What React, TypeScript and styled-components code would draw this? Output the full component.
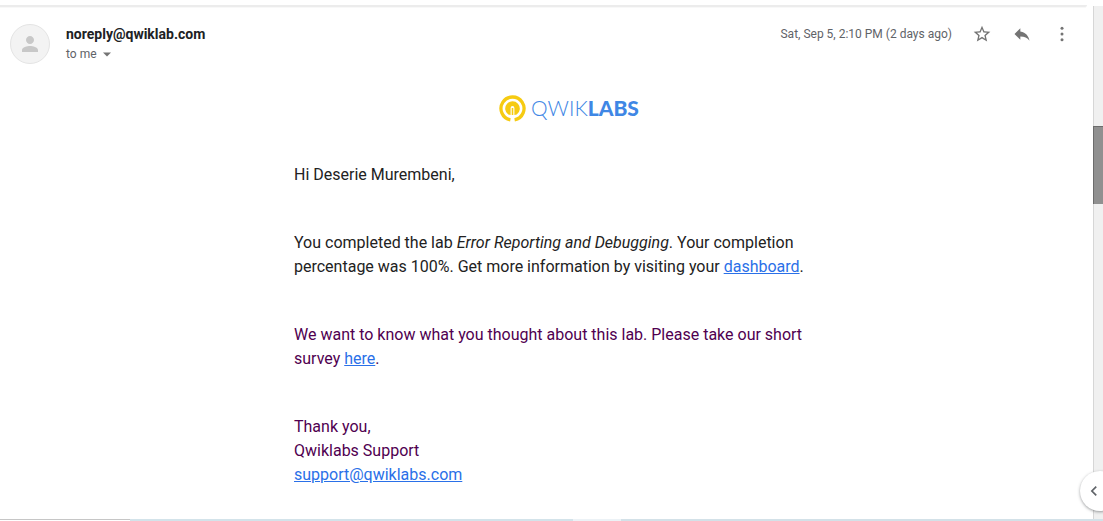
import React from "react";
import styled, { createGlobalStyle } from "styled-components";

const GlobalStyle = createGlobalStyle`
  * { box-sizing: border-box; }
  body {
    margin: 0;
    background: #fff;
    color: #222;
    font-family: Roboto, "Liberation Sans", sans-serif;
  }
`;

const Page = styled.div`
  position: relative;
  display: flex;
  flex-direction: column;
  min-height: 100vh;
  padding-top: 5px;
  overflow: hidden;
`;

const Main = styled.div`
  flex: 1;
  display: flex;
`;

const Pane = styled.main`
  flex: 1;
  min-width: 0;
`;

const TopEdge = styled.div`
  height: 3px;
  margin-right: 6px;
  background: #ececec;
  border-bottom: 1px solid #f8f8f8;
  border-bottom-right-radius: 3px;
`;

const Message = styled.article`
  padding: 16px 21px 32px 10px;
`;

const Header = styled.header`
  display: flex;
  align-items: flex-start;
  gap: 16px;
`;

const Avatar = styled.div`
  display: flex;
  align-items: center;
  justify-content: center;
  width: 40px;
  height: 40px;
  border: 1px solid #e4e4e4;
  border-radius: 50%;
  background: #f3f3f3;
`;

const Sender = styled.div`
  flex: 1;
  min-width: 0;
`;

const SenderName = styled.h3`
  margin: 0;
  font-size: 14px;
  line-height: 20px;
  font-weight: 700;
  color: #202124;
`;

const Recipient = styled.button`
  display: flex;
  align-items: center;
  gap: 5px;
  padding: 0;
  border: 0;
  background: none;
  font: inherit;
  font-size: 12px;
  line-height: 20px;
  color: #5f6368;
  cursor: pointer;
`;

const Actions = styled.div`
  display: flex;
  align-items: center;
  gap: 20px;
`;

const Sent = styled.time`
  font-size: 12px;
  line-height: 20px;
  color: #5f6368;
`;

const IconButton = styled.button`
  display: flex;
  padding: 0;
  border: 0;
  background: none;
  color: #747474;
  cursor: pointer;
`;

const BodyArea = styled.div`
  padding-left: 56px;
`;

const Body = styled.div`
  max-width: 550px;
  margin: 30px auto 0;
`;

const Logo = styled.div`
  display: flex;
  align-items: center;
  justify-content: center;
  gap: 5px;
  height: 28px;
  margin-bottom: 41px;
  font-family: Lato, sans-serif;
  font-size: 21px;
  line-height: 28px;
  color: #3f87e5;
`;

const LogoLight = styled.span`
  font-weight: 300;
`;

const LogoHeavy = styled.span`
  font-weight: 900;
`;

const Paragraph = styled.p<{ $quoted?: boolean }>`
  margin: 0 0 44px;
  font-size: 16px;
  line-height: 24px;
  color: ${(p) => (p.$quoted ? "#500050" : "#222")};

  &:last-child { margin-bottom: 0; }
`;

const Link = styled.a`
  color: #2a70e8;
  text-decoration: underline;
`;

const ScrollTrack = styled.div`
  width: 10px;
  margin-top: 1px;
  padding-top: 120px;
  background: #f0f0f0;
  box-shadow: inset 1px 0 #d6d6d6;
`;

const ScrollThumb = styled.div`
  height: 78px;
  background: #909090;
  border: solid #6c6c6c;
  border-width: 1px 0 0 1px;
`;

const PanelToggle = styled.button`
  position: absolute;
  right: -17px;
  bottom: 10px;
  width: 40px;
  height: 40px;
  padding: 0 0 0 4px;
  display: flex;
  align-items: center;
  border: 0;
  border-radius: 50%;
  background: #fff;
  color: #5f6368;
  box-shadow: 0 1px 3px rgba(60, 64, 67, 0.5);
  cursor: pointer;
`;

const BottomEdge = styled.div`
  display: flex;
  height: 2px;
`;

const EdgePart = styled.div<{ $share: number; $color: string; $line?: boolean }>`
  flex: ${(p) => p.$share} 0 0;
  height: ${(p) => (p.$line ? "1px" : "2px")};
  background: ${(p) => p.$color};
`;

export default function App() {
  return (
    <>
      <GlobalStyle />
      <Page>
        <Main>
          <Pane>
            <TopEdge />
            <Message>
              <Header>
                <Avatar>
                  <svg width="24" height="24" viewBox="0 0 24 24" fill="#c8c8c8" aria-hidden="true">
                    <path d="M12 12c2.200 0 4-1.800 4-4s-1.800-4-4-4-4 1.800-4 4 1.800 4 4 4zm0 2c-2.700 0-8 1.300-8 4v2h16v-2c0-2.700-5.300-4-8-4z" />
                  </svg>
                </Avatar>
                <Sender>
                  <SenderName>noreply@qwiklab.com</SenderName>
                  <Recipient type="button">
                    to me
                    <svg width="10" height="5" viewBox="0 0 10 5" fill="#747474" aria-hidden="true">
                      <path d="M1 0.500h8L5 4.500z" />
                    </svg>
                  </Recipient>
                </Sender>
                <Actions>
                  <Sent>Sat, Sep 5, 2:10 PM (2 days ago)</Sent>
                  <IconButton type="button" aria-label="Star">
                    <svg width="20" height="20" viewBox="0 0 24 24" fill="currentColor" aria-hidden="true">
                      <path d="M22 9.240l-7.190-.62L12 2 9.190 8.630 2 9.240l5.460 4.730L5.820 21 12 17.270 18.180 21l-1.630-7.030L22 9.240zM12 15.400l-3.760 2.270 1-4.280-3.320-2.880 4.380-.38L12 6.100l1.710 4.040 4.380.38-3.320 2.880 1 4.280L12 15.400z" />
                    </svg>
                  </IconButton>
                  <IconButton type="button" aria-label="Reply">
                    <svg width="20" height="20" viewBox="0 0 24 24" fill="currentColor" aria-hidden="true">
                      <path d="M10 9V5l-7 7 7 7v-4.100c5 0 8.500 1.600 11 5.100-1-5-4-10-11-11z" />
                    </svg>
                  </IconButton>
                  <IconButton type="button" aria-label="More">
                    <svg width="20" height="20" viewBox="0 0 24 24" fill="currentColor" aria-hidden="true">
                      <circle cx="12" cy="5" r="1.800" />
                      <circle cx="12" cy="12" r="1.800" />
                      <circle cx="12" cy="19" r="1.800" />
                    </svg>
                  </IconButton>
                </Actions>
              </Header>
              <BodyArea>
                <Body>
                  <Logo>
                    <svg width="27" height="27" viewBox="0 0 27 27" fill="none" aria-hidden="true">
                      <path d="M11.400 24.800A11.500 11.500 0 1 1 15.600 24.800" stroke="#f6cb12" strokeWidth="3.300" />
                      <path d="M9.300 19.600A7.300 7.300 0 1 1 17.700 19.600L15.400 20V13a1.900 1.900 0 0 0-3.800 0V20z" fill="#f6cb12" />
                      <path d="M13.500 13V20" stroke="#f6cb12" strokeWidth="1.600" />
                    </svg>
                    <span>
                      <LogoLight>QWIK</LogoLight>
                      <LogoHeavy>LABS</LogoHeavy>
                    </span>
                  </Logo>
                  <Paragraph>Hi Deserie Murembeni,</Paragraph>
                  <Paragraph>
                    You completed the lab <em>Error Reporting and Debugging</em>. Your completion percentage was
                    100%. Get more information by visiting your <Link href="#dashboard">dashboard</Link>.
                  </Paragraph>
                  <Paragraph $quoted>
                    We want to know what you thought about this lab. Please take our short survey{" "}
                    <Link href="#survey">here</Link>.
                  </Paragraph>
                  <Paragraph $quoted>
                    Thank you,
                    <br />
                    Qwiklabs Support
                    <br />
                    <Link href="mailto:support@qwiklabs.com">support@qwiklabs.com</Link>
                  </Paragraph>
                </Body>
              </BodyArea>
            </Message>
          </Pane>
          <ScrollTrack>
            <ScrollThumb />
          </ScrollTrack>
        </Main>
        <BottomEdge>
          <EdgePart $share={130} $color="#c6c6c6" $line />
          <EdgePart $share={443} $color="#d3e3ea" />
          <EdgePart $share={48} $color="#ecf2f6" />
          <EdgePart $share={482} $color="#d3e1e8" />
        </BottomEdge>
        <PanelToggle type="button" aria-label="Show side panel">
          <svg width="20" height="20" viewBox="0 0 24 24" fill="currentColor" aria-hidden="true">
            <path d="M15.400 7.400L14 6l-6 6 6 6 1.400-1.400L10.800 12z" />
          </svg>
        </PanelToggle>
      </Page>
    </>
  );
}
